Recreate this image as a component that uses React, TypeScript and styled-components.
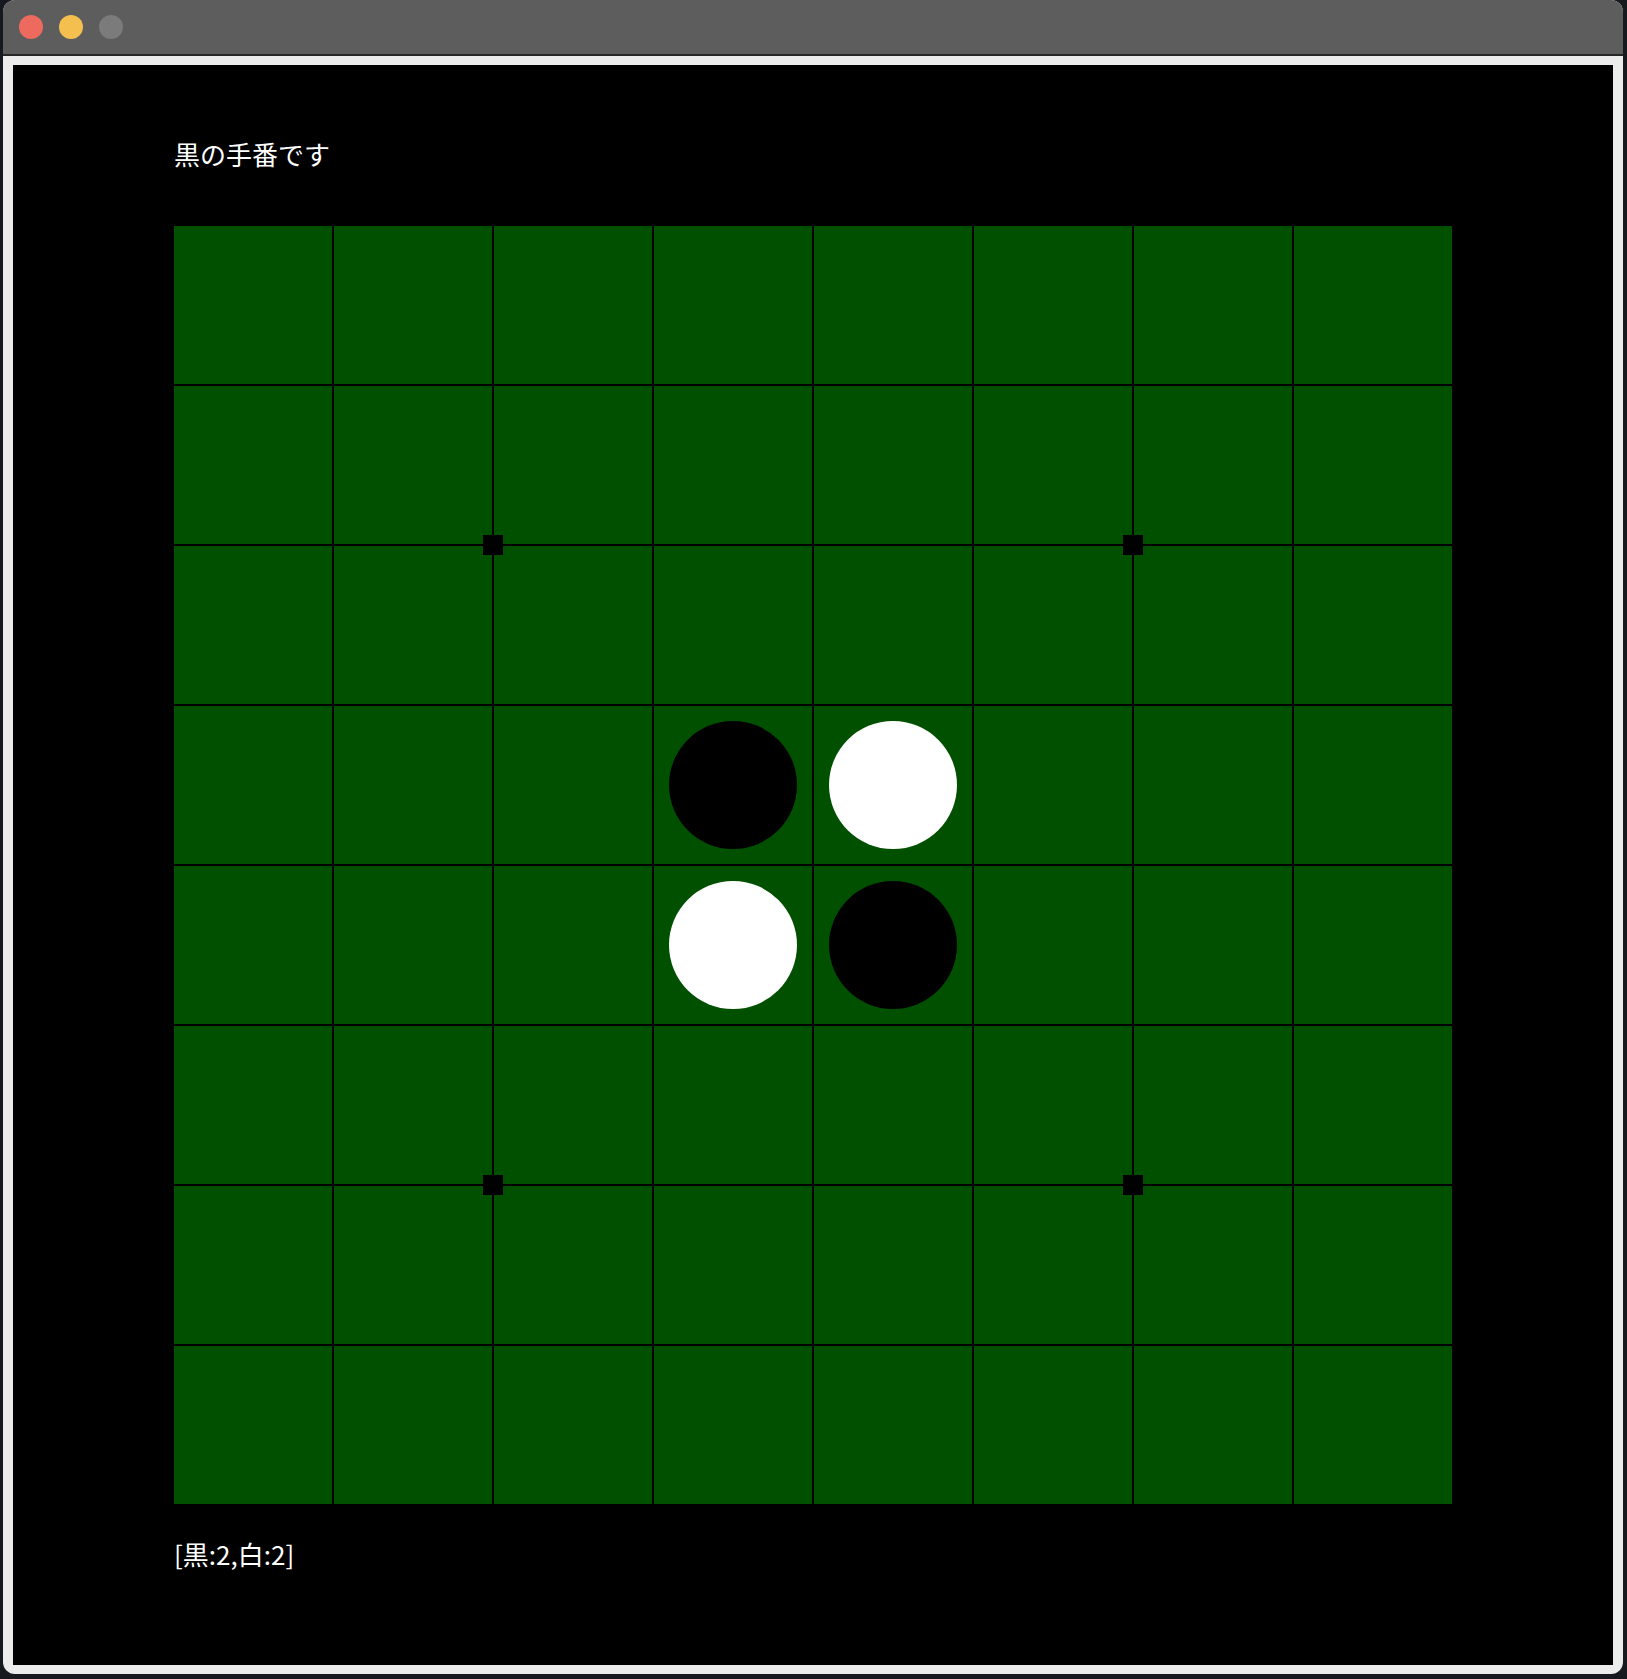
import React from "react";
import styled, { createGlobalStyle } from "styled-components";

const GlobalStyle = createGlobalStyle`
  html, body {
    margin: 0;
    padding: 0;
    background: #16191d;
  }
  body {
    font-family: "Noto Sans CJK JP", "Noto Sans", sans-serif;
  }
`;

const Page = styled.div`
  width: 1627px;
  height: 1679px;
  padding-left: 3px;
  box-sizing: border-box;
`;

const Window = styled.div`
  width: 1620px;
  height: 1674px;
  border-radius: 12px;
  overflow: hidden;
  background: #ececec;
  display: flex;
  flex-direction: column;
`;

const TitleBar = styled.div`
  height: 54px;
  background: #5d5d5d;
  border-bottom: 2px solid #262626;
  display: flex;
  align-items: center;
  gap: 16px;
  padding-left: 16px;
  box-sizing: content-box;
`;

const Light = styled.span<{ $color: string }>`
  width: 24px;
  height: 24px;
  border-radius: 50%;
  background: ${(p) => p.$color};
  display: block;
`;

const Frame = styled.div`
  padding: 9px 10px 9px 10px;
`;

const Canvas = styled.div`
  width: 1600px;
  height: 1600px;
  background: #000;
  box-sizing: border-box;
  padding: 76px 0 0 161px;
  display: flex;
  flex-direction: column;
  align-items: flex-start;
`;

const Label = styled.div<{ $gapTop: number }>`
  color: #fff;
  font-family: "Noto Sans CJK JP", "Noto Sans", sans-serif;
  font-size: 26px;
  line-height: 26px;
  margin-top: ${(p) => p.$gapTop}px;
  white-space: nowrap;
`;

const Board = styled.div`
  position: relative;
  margin-top: 59px;
  width: 1280px;
  height: 1280px;
  display: grid;
  grid-template-columns: repeat(8, 160px);
  grid-template-rows: repeat(8, 160px);
`;

const Cell = styled.div`
  box-sizing: border-box;
  background: #005000;
  border-right: 2px solid #000;
  border-bottom: 2px solid #000;
  display: flex;
  align-items: center;
  justify-content: center;
`;

const Disc = styled.div<{ $white: boolean }>`
  width: 128px;
  height: 128px;
  border-radius: 50%;
  background: ${(p) => (p.$white ? "#fff" : "#000")};
`;

const Star = styled.div`
  position: absolute;
  width: 20px;
  height: 20px;
  background: #000;
`;

type Stone = "B" | "W" | null;

const initial: Stone[][] = Array.from({ length: 8 }, (_, r) =>
  Array.from({ length: 8 }, (_, c) => {
    if ((r === 3 && c === 3) || (r === 4 && c === 4)) return "B";
    if ((r === 3 && c === 4) || (r === 4 && c === 3)) return "W";
    return null;
  })
);

const stars = [
  [309, 309],
  [949, 309],
  [309, 949],
  [949, 949],
];

export default function App() {
  const board = initial;
  const black = board.flat().filter((s) => s === "B").length;
  const white = board.flat().filter((s) => s === "W").length;
  return (
    <Page>
      <GlobalStyle />
      <Window>
        <TitleBar>
          <Light $color="#ee6a5f" />
          <Light $color="#f5bf4f" />
          <Light $color="#7b7b7b" />
        </TitleBar>
        <Frame>
          <Canvas>
            <Label $gapTop={0}>黒の手番です</Label>
            <Board>
              {board.map((row, r) =>
                row.map((s, c) => (
                  <Cell key={`${r}-${c}`}>
                    {s && <Disc $white={s === "W"} />}
                  </Cell>
                ))
              )}
              {stars.map(([x, y], i) => (
                <Star key={i} style={{ left: x, top: y }} />
              ))}
            </Board>
            <Label $gapTop={35}>[黒:{black},白:{white}]</Label>
          </Canvas>
        </Frame>
      </Window>
    </Page>
  );
}
